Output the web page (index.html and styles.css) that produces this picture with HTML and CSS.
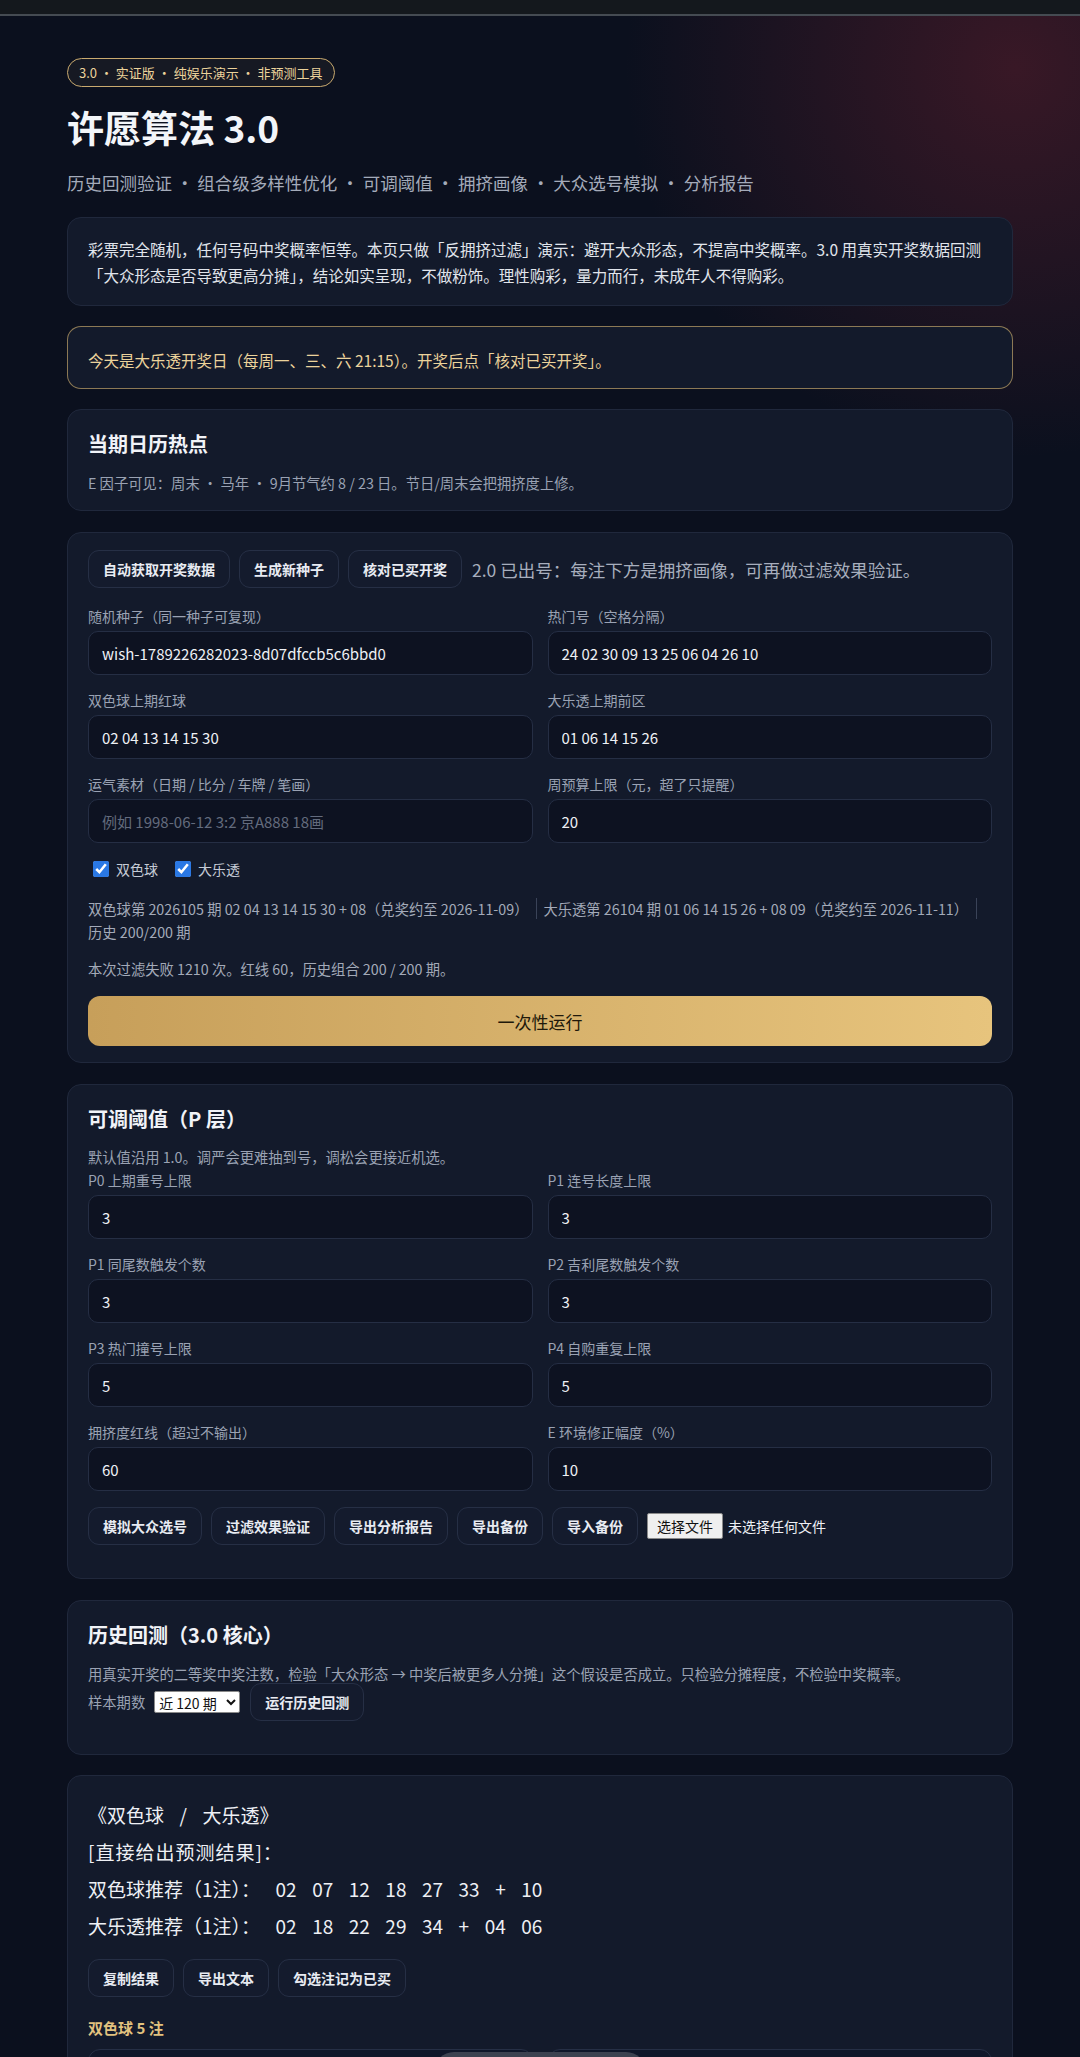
FILE: index.html
```html
<!DOCTYPE html>
<html lang="zh-CN">
<head>
    <meta charset="UTF-8">
    <meta name="viewport" content="width=device-width, initial-scale=1.0">
    <title>许愿算法 3.0</title>
    <link rel="stylesheet" href="styles.css">
</head>
<body>
    <div class="topbar"></div>

    <main class="wrap">
        <header class="hero">
            <span class="badge">3.0 · 实证版 · 纯娱乐演示 · 非预测工具</span>
            <h1>许愿算法 3.0</h1>
            <p class="sub">历史回测验证 · 组合级多样性优化 · 可调阈值 · 拥挤画像 · 大众选号模拟 · 分析报告</p>
        </header>

        <section class="card intro">
            <p>彩票完全随机，任何号码中奖概率恒等。本页只做「反拥挤过滤」演示：避开大众形态，不提高中奖概率。3.0 用真实开奖数据回测「大众形态是否导致更高分摊」，结论如实呈现，不做粉饰。理性购彩，量力而行，未成年人不得购彩。</p>
        </section>

        <section class="card notice">
            今天是大乐透开奖日（每周一、三、六 21:15）。开奖后点「核对已买开奖」。
        </section>

        <section class="card calendar">
            <h2>当期日历热点</h2>
            <p class="muted">E 因子可见：周末 · 马年 · 9月节气约 8 / 23 日。节日/周末会把拥挤度上修。</p>
        </section>

        <section class="card main-form">
            <div class="actions">
                <button class="btn">自动获取开奖数据</button>
                <button class="btn">生成新种子</button>
                <button class="btn">核对已买开奖</button>
                <span class="hint">2.0 已出号：每注下方是拥挤画像，可再做过滤效果验证。</span>
            </div>

            <div class="fields">
                <div class="field">
                    <label for="seed">随机种子（同一种子可复现）</label>
                    <input id="seed" type="text" value="wish-1789226282023-8d07dfccb5c6bbd0">
                </div>
                <div class="field">
                    <label for="hot">热门号（空格分隔）</label>
                    <input id="hot" type="text" value="24 02 30 09 13 25 06 04 26 10">
                </div>
                <div class="field">
                    <label for="ssqLast">双色球上期红球</label>
                    <input id="ssqLast" type="text" value="02 04 13 14 15 30">
                </div>
                <div class="field">
                    <label for="dltLast">大乐透上期前区</label>
                    <input id="dltLast" type="text" value="01 06 14 15 26">
                </div>
                <div class="field">
                    <label for="luck">运气素材（日期 / 比分 / 车牌 / 笔画）</label>
                    <input id="luck" type="text" placeholder="例如 1998-06-12 3:2 京A888 18画">
                </div>
                <div class="field">
                    <label for="budget">周预算上限（元，超了只提醒）</label>
                    <input id="budget" type="text" value="20">
                </div>
            </div>

            <div class="checks">
                <label><input type="checkbox" checked> 双色球</label>
                <label><input type="checkbox" checked> 大乐透</label>
            </div>

            <p class="status">
                <span class="seg">双色球第 2026105 期 02 04 13 14 15 30 + 08（兑奖约至 2026-11-09）</span><span class="seg">大乐透第 26104 期 01 06 14 15 26 + 08 09（兑奖约至 2026-11-11）</span><span class="nowrap">历史 200/200 期</span>
            </p>
            <p class="status status-gap">本次过滤失败 1210 次。红线 60，历史组合 200 / 200 期。</p>

            <button class="run">一次性运行</button>
        </section>

        <section class="card thresholds">
            <h2>可调阈值（P 层）</h2>
            <p class="muted desc">默认值沿用 1.0。调严会更难抽到号，调松会更接近机选。</p>

            <div class="fields tight">
                <div class="field">
                    <label for="p0">P0 上期重号上限</label>
                    <input id="p0" type="text" value="3">
                </div>
                <div class="field">
                    <label for="p1a">P1 连号长度上限</label>
                    <input id="p1a" type="text" value="3">
                </div>
                <div class="field">
                    <label for="p1b">P1 同尾数触发个数</label>
                    <input id="p1b" type="text" value="3">
                </div>
                <div class="field">
                    <label for="p2">P2 吉利尾数触发个数</label>
                    <input id="p2" type="text" value="3">
                </div>
                <div class="field">
                    <label for="p3">P3 热门撞号上限</label>
                    <input id="p3" type="text" value="5">
                </div>
                <div class="field">
                    <label for="p4">P4 自购重复上限</label>
                    <input id="p4" type="text" value="5">
                </div>
                <div class="field">
                    <label for="red">拥挤度红线（超过不输出）</label>
                    <input id="red" type="text" value="60">
                </div>
                <div class="field">
                    <label for="env">E 环境修正幅度（%）</label>
                    <input id="env" type="text" value="10">
                </div>
            </div>

            <div class="actions bottom-actions">
                <button class="btn">模拟大众选号</button>
                <button class="btn">过滤效果验证</button>
                <button class="btn">导出分析报告</button>
                <button class="btn">导出备份</button>
                <button class="btn">导入备份</button>
                <label class="file">
                    <span class="file-btn">选择文件</span>
                    <span class="file-name">未选择任何文件</span>
                </label>
            </div>
        </section>

        <section class="card history">
            <h2>历史回测（3.0 核心）</h2>
            <p class="muted desc">用真实开奖的二等奖中奖注数，检验「大众形态 → 中奖后被更多人分摊」这个假设是否成立。只检验分摊程度，不检验中奖概率。</p>
            <div class="actions sample-row">
                <span class="muted">样本期数</span>
                <select class="sample">
                    <option>近 120 期</option>
                    <option>近 60 期</option>
                    <option>近 200 期</option>
                </select>
                <button class="btn">运行历史回测</button>
            </div>
        </section>

        <section class="card result">
<pre class="output">《双色球  /  大乐透》
<span class="lead">[直接给出预测结果]：</span>
双色球推荐（1注）：  02  07  12  18  27  33  +  10
大乐透推荐（1注）：  02  18  22  29  34  +  04  06</pre>
            <div class="actions result-actions">
                <button class="btn">复制结果</button>
                <button class="btn">导出文本</button>
                <button class="btn">勾选注记为已买</button>
            </div>
            <h3 class="group-title">双色球 5 注</h3>
            <div class="tickets">
                <div class="ticket"></div>
                <div class="ticket"></div>
            </div>
        </section>
    </main>

    <div class="toast"></div>
</body>
</html>
```

FILE: styles.css
```css
body {
    margin: 0;
    padding: 0;
    font-family: "Noto Sans CJK SC", "Noto Sans", sans-serif;
    color: #e8ebf2;
    background-color: #0b101e;
    background-image: radial-gradient(circle at 94% 3%, rgba(125, 36, 50, 0.4), rgba(125, 36, 50, 0) 390px);
    background-repeat: no-repeat;
    min-height: 2057px;
}

.topbar {
    height: 14px;
    background: #14181d;
    border-bottom: 2px solid #454b52;
}

.wrap {
    width: 946px;
    margin: 0 auto;
    padding: 42px 0 40px;
}

/* header */
.hero {
    display: flex;
    flex-direction: column;
    align-items: flex-start;
}

.badge {
    height: 27px;
    line-height: 27px;
    padding: 0 11px;
    border: 1px solid #c9aa6f;
    border-radius: 999px;
    font-size: 13px;
    color: #ecd39b;
    background: rgba(201, 170, 111, 0.06);
}

h1 {
    margin: 17px 0 0;
    font-size: 37px;
    line-height: 46px;
    font-weight: 700;
    color: #f3f5f9;
}

.sub {
    margin: 19px 0 0;
    font-size: 17.5px;
    line-height: 27px;
    color: #a4abba;
}

/* cards */
.card {
    margin-top: 20px;
    padding: 20px;
    background: #131a2b;
    border: 1px solid #20283c;
    border-radius: 14px;
}

.card h2 {
    margin: 0;
    font-size: 20px;
    line-height: 28px;
    font-weight: 700;
    color: #f1f3f8;
}

.muted {
    color: #9aa2b3;
    font-size: 14.3px;
    line-height: 20px;
}

.intro {
    margin-top: 21px;
    padding: 18px 20px 17px;
}

.intro p {
    margin: 0;
    font-size: 15.5px;
    line-height: 26px;
    color: #e1e5ec;
}

.notice {
    padding: 22px 20px 17px;
    border-color: rgba(214, 180, 112, 0.62);
    font-size: 15.5px;
    line-height: 22px;
    color: #ecd39b;
}

.calendar {
    padding-bottom: 17px;
}

.calendar .muted {
    margin: 15px 0 0;
}

/* buttons */
.actions {
    display: flex;
    align-items: center;
    flex-wrap: wrap;
    gap: 9px;
}

.btn {
    height: 38px;
    padding: 0 14px;
    font-family: inherit;
    font-size: 14px;
    font-weight: 700;
    color: #e8ebf2;
    background: #141b2d;
    border: 1px solid #262f45;
    border-radius: 11px;
    cursor: pointer;
}

.hint {
    margin-left: 1px;
    font-size: 17.5px;
    color: #a7aebd;
}

/* form */
.main-form {
    margin-top: 21px;
    padding: 17px 20px 16px;
}

.fields {
    display: grid;
    grid-template-columns: 1fr 1fr;
    column-gap: 15px;
    row-gap: 15px;
    margin-top: 18px;
}

.fields.tight {
    margin-top: 3px;
}

.field {
    display: flex;
    flex-direction: column;
}

.field label {
    font-size: 14px;
    line-height: 20px;
    color: #9aa2b3;
}

.field input {
    box-sizing: border-box;
    height: 44px;
    margin-top: 5px;
    padding: 0 13px;
    font-family: inherit;
    font-size: 15px;
    color: #eef0f5;
    background: #0d1221;
    border: 1px solid #252e44;
    border-radius: 10px;
    outline: none;
}

.field input::placeholder {
    color: #636b7d;
}

.checks {
    display: flex;
    gap: 12px;
    margin-top: 15px;
    font-size: 14px;
    line-height: 22px;
    color: #c5cbd6;
}

.checks label {
    display: flex;
    align-items: center;
    gap: 7px;
}

.checks input {
    width: 16px;
    height: 16px;
    margin: 0 0 0 5px;
    accent-color: #2a78e4;
}

.status {
    margin: 17px 0 0;
    font-size: 14.3px;
    line-height: 23px;
    color: #a3aab9;
}

.status-gap {
    margin-top: 14px;
}

.seg {
    padding-right: 8px;
    margin-right: 6px;
    border-right: 1px solid #3a4358;
}

.nowrap {
    white-space: nowrap;
}

.run {
    display: block;
    width: 100%;
    height: 50px;
    margin-top: 16px;
    font-family: inherit;
    font-size: 17px;
    color: #20180a;
    background: linear-gradient(90deg, #c79f5a, #e7c47d);
    border: none;
    border-radius: 12px;
    cursor: pointer;
}

/* thresholds */
.thresholds {
    margin-top: 21px;
}

.desc {
    margin: 14px 0 0;
}

.bottom-actions {
    margin-top: 16px;
    margin-bottom: 13px;
}

.file {
    display: flex;
    align-items: center;
    gap: 5px;
}

.file-btn {
    height: 24px;
    line-height: 24px;
    padding: 0 9px;
    font-size: 14px;
    color: #111;
    background: #efefef;
    border: 1px solid #8a8a8a;
    border-radius: 2px;
}

.file-name {
    font-size: 14px;
    color: #eef0f5;
}

/* history */
.history {
    margin-top: 21px;
}

.history .desc {
    margin-top: 15px;
}

.sample-row {
    margin-top: -1px;
    margin-bottom: 13px;
    gap: 10px;
}

.sample {
    width: 86px;
    height: 22px;
    margin-left: -1px;
    font-family: inherit;
    font-size: 14px;
    color: #111;
    background: #fff;
    border: 1px solid #8a8a8a;
    border-radius: 2px;
}

/* result */
.output {
    margin: 0;
    font-family: inherit;
    font-size: 19px;
    line-height: 37px;
    word-spacing: 3.5px;
    color: #eef0f5;
    white-space: pre;
}

.lead {
    letter-spacing: 1px;
}

.result-actions {
    margin-top: 15px;
}

.group-title {
    margin: 20px 0 0;
    font-size: 15px;
    line-height: 22px;
    font-weight: 700;
    color: #e2c27f;
}

.tickets {
    display: grid;
    grid-template-columns: 1fr 1fr;
    gap: 15px;
    margin-top: 10px;
}

.ticket {
    height: 140px;
    background: #10172a;
    border: 1px solid #262f45;
    border-radius: 12px;
}

.toast {
    position: fixed;
    left: 50%;
    bottom: -35px;
    width: 212px;
    height: 40px;
    margin-left: -106px;
    background: #3d4250;
    border-radius: 20px;
}
```
